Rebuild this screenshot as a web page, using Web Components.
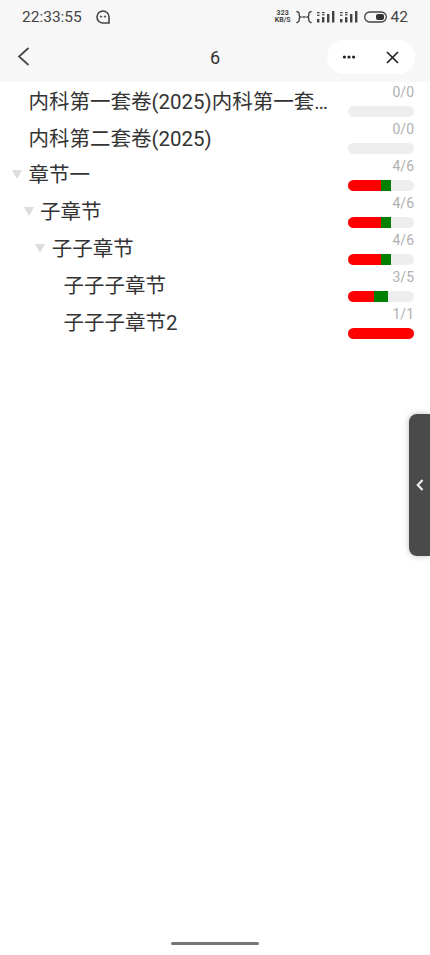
<!DOCTYPE html>
<html lang="zh">
<head>
<meta charset="utf-8">
<title>6</title>
<style>
    html, body { margin: 0; padding: 0; background: #fff; }
    body { font-family: Roboto, "Noto Sans CJK SC", sans-serif; }
    #page { position: relative; display: flex; flex-direction: column; width: 430px; height: 955px; overflow: hidden; }
    tree-list { flex: 1; }
</style>
</head>
<body>
<div id="page">
    <top-bar title="6" time="22:33:55" battery="42"></top-bar>
    <tree-list>
        <tree-row level="0" done="0" total="0">内科第一套卷(2025)内科第一套卷(2025)</tree-row>
        <tree-row level="0" done="0" total="0">内科第二套卷(2025)</tree-row>
        <tree-row level="0" open done="4" total="6" red="50" green="15">章节一</tree-row>
        <tree-row level="1" open done="4" total="6" red="50" green="15">子章节</tree-row>
        <tree-row level="2" open done="4" total="6" red="50" green="15">子子章节</tree-row>
        <tree-row level="3" done="3" total="5" red="40" green="20">子子子章节</tree-row>
        <tree-row level="3" done="1" total="1" red="100" green="0">子子子章节2</tree-row>
    </tree-list>
    <home-bar></home-bar>
    <side-handle></side-handle>
</div>
<script>
class TopBar extends HTMLElement {
    constructor() {
        super();
        this.attachShadow({ mode: "open" });
    }
    signal() {
        return /*html*/`
        <svg width="20" height="14" viewBox="0 0 20 14" fill="#444">
            <rect x="1" y="9" width="2.4" height="3.5"/><rect x="6" y="7" width="2.4" height="5.5"/>
            <rect x="11" y="4" width="2.4" height="8.5"/><rect x="16" y="1" width="2.4" height="11.5"/>
            <rect x="1" y="2" width="2.6" height="1.2"/><rect x="1" y="4.6" width="2.6" height="1.2"/>
            <rect x="6" y="2" width="2.6" height="1.2"/><rect x="6" y="4.2" width="2.6" height="1.2"/>
        </svg>`;
    }
    connectedCallback() {
        this.shadowRoot.innerHTML = /*html*/`
        <style>
            :host { display: block; height: 82px; background: #f7f7f7; color: #333; font-family: Roboto, sans-serif; }
            #status { display: flex; align-items: center; height: 34px; padding: 0 22px; color: #444; font-size: 15.5px; }
            #face { margin-left: 14px; }
            #right { display: flex; align-items: center; margin-left: auto; }
            #speed { font-size: 7px; line-height: 7px; font-weight: 700; text-align: center; margin-right: 5px; }
            #right svg { display: block; }
            #level { margin-left: 4px; }
            #nav { display: flex; align-items: center; height: 46px; padding: 0 15px 0 17px; }
            #title { flex: 1; text-align: center; font-size: 18px; margin-left: 73px; color: #333; }
            #capsule { display: flex; align-items: center; justify-content: space-between; box-sizing: border-box; width: 88px; height: 34px; padding: 0 16px 0 15px; background: #fff; border-radius: 17px; }
        </style>
        <div id="status">
            <span>${this.getAttribute('time')}</span>
            <svg id="face" width="14" height="14" viewBox="0 0 14 14" fill="none" stroke="#444" stroke-width="1.6">
                <path d="M7 1A6 6 0 1 0 7 13h6V7A6 6 0 0 0 7 1z"/>
                <circle cx="5" cy="6.6" r=".8" fill="#444" stroke-width=".6"/>
                <circle cx="9" cy="6.6" r=".8" fill="#444" stroke-width=".6"/>
            </svg>
            <div id="right">
                <div id="speed">323<br>KB/S</div>
                <svg width="16" height="14" viewBox="0 0 16 14" fill="none" stroke="#444" stroke-width="1.4" stroke-linecap="round">
                    <path d="M1 1.5c1.8.6 2.2 1.2 2.2 2.6v1.2c0 .9.4 1.4 1.3 1.7-.9.3-1.3.8-1.3 1.7v1.2c0 1.4-.4 2-2.2 2.6"/>
                    <path d="M15 1.5c-1.8.6-2.2 1.2-2.2 2.6v1.2c0 .9-.4 1.4-1.3 1.7.9.3 1.3.8 1.3 1.7v1.2c0 1.4.4 2 2.2 2.6"/>
                    <path d="M7 7h2"/>
                </svg>
                <span style="width:4px"></span>
                ${this.signal()}
                <span style="width:3px"></span>
                ${this.signal()}
                <span style="width:5px"></span>
                <svg width="23" height="12" viewBox="0 0 23 12" fill="none">
                    <rect x=".7" y="1" width="21.6" height="10" rx="5" stroke="#444" stroke-width="1.3"/>
                    <rect x="12" y="3" width="8" height="6" rx="2" fill="#333"/>
                </svg>
                <span id="level">${this.getAttribute('battery')}</span>
            </div>
        </div>
        <div id="nav">
            <svg width="13" height="20" viewBox="0 0 13 20" fill="none" stroke="#444" stroke-width="1.7">
                <path d="M11.5 1L2 9.5l9.5 8.5"/>
            </svg>
            <div id="title">${this.getAttribute('title')}</div>
            <div id="capsule">
                <svg width="14" height="4" viewBox="0 0 14 4" fill="#222">
                    <circle cx="2.4" cy="2" r="1.6"/><circle cx="7" cy="2" r="1.6"/><circle cx="11.6" cy="2" r="1.6"/>
                </svg>
                <svg width="13" height="13" viewBox="0 0 13 13" fill="none" stroke="#222" stroke-width="1.7">
                    <path d="M1 1l11 11M12 1L1 12"/>
                </svg>
            </div>
        </div>`;
    }
}

class TreeList extends HTMLElement {
    constructor() {
        super();
        this.attachShadow({ mode: "open" });
        this.shadowRoot.innerHTML = /*html*/`
        <style>
            :host { display: flex; flex-direction: column; }
        </style>
        <slot></slot>`;
    }
}

class TreeRow extends HTMLElement {
    constructor() {
        super();
        this.attachShadow({ mode: "open" });
    }
    connectedCallback() {
        var level = Number(this.getAttribute('level'));
        this.shadowRoot.innerHTML = /*html*/`
        <style>
            :host { display: flex; align-items: center; box-sizing: border-box; height: 36.9px; padding-right: 16px; font-family: Roboto, "Noto Sans CJK SC", sans-serif; }
            #indent { flex: none; display: flex; justify-content: flex-end; align-items: center; width: ${28.4 + level * 11.7}px; padding-right: 6.4px; box-sizing: border-box; }
            #arrow { width: 0; height: 0; border-left: 5.5px solid transparent; border-right: 5.5px solid transparent; border-top: 9px solid #ddd; }
            #name { flex: 1; min-width: 0; white-space: nowrap; overflow: hidden; text-overflow: ellipsis; font-size: 20.5px; color: #333; padding-right: 15px; margin-top: -1.5px; }
        </style>
        <div id="indent">${this.hasAttribute('open') ? '<div id="arrow"></div>' : ''}</div>
        <div id="name"><slot></slot></div>
        <progress-meter done="${this.getAttribute('done')}" total="${this.getAttribute('total')}"
            red="${this.getAttribute('red') || 0}" green="${this.getAttribute('green') || 0}"></progress-meter>`;
    }
}

class ProgressMeter extends HTMLElement {
    constructor() {
        super();
        this.attachShadow({ mode: "open" });
    }
    connectedCallback() {
        this.shadowRoot.innerHTML = /*html*/`
        <style>
            :host { flex: none; display: flex; flex-direction: column; align-items: flex-end; width: 66px; gap: 6px; margin-top: 2px; font-family: Roboto, sans-serif; }
            #label { font-size: 14px; line-height: 15px; color: #b0b0b0; }
            #track { display: flex; width: 100%; height: 11px; border-radius: 6px; background: #eee; overflow: hidden; }
            #red { background: #f00; width: ${this.getAttribute('red')}%; }
            #green { background: #008000; width: ${this.getAttribute('green')}%; }
        </style>
        <div id="label">${this.getAttribute('done')}/${this.getAttribute('total')}</div>
        <div id="track"><div id="red"></div><div id="green"></div></div>`;
    }
}

class HomeBar extends HTMLElement {
    constructor() {
        super();
        this.attachShadow({ mode: "open" });
        this.shadowRoot.innerHTML = /*html*/`
        <style>
            :host { display: flex; justify-content: center; padding-bottom: 10px; }
            div { width: 88px; height: 3px; border-radius: 2px; background: #777; }
        </style>
        <div></div>`;
    }
}

class SideHandle extends HTMLElement {
    constructor() {
        super();
        this.attachShadow({ mode: "open" });
        this.shadowRoot.innerHTML = /*html*/`
        <style>
            :host { position: absolute; right: 0; top: 414px; display: flex; align-items: center; justify-content: center; width: 21px; height: 142px; background: #4a4a4a; border-radius: 8px 0 0 8px; box-shadow: 0 0 6px rgba(0,0,0,.25); }
        </style>
        <svg width="8" height="12" viewBox="0 0 8 12" fill="none" stroke="#eee" stroke-width="2.2"><path d="M6.5 1L1.8 6l4.7 5"/></svg>`;
    }
}

window.customElements.define("top-bar", TopBar);
window.customElements.define("tree-list", TreeList);
window.customElements.define("tree-row", TreeRow);
window.customElements.define("progress-meter", ProgressMeter);
window.customElements.define("home-bar", HomeBar);
window.customElements.define("side-handle", SideHandle);
</script>
</body>
</html>
